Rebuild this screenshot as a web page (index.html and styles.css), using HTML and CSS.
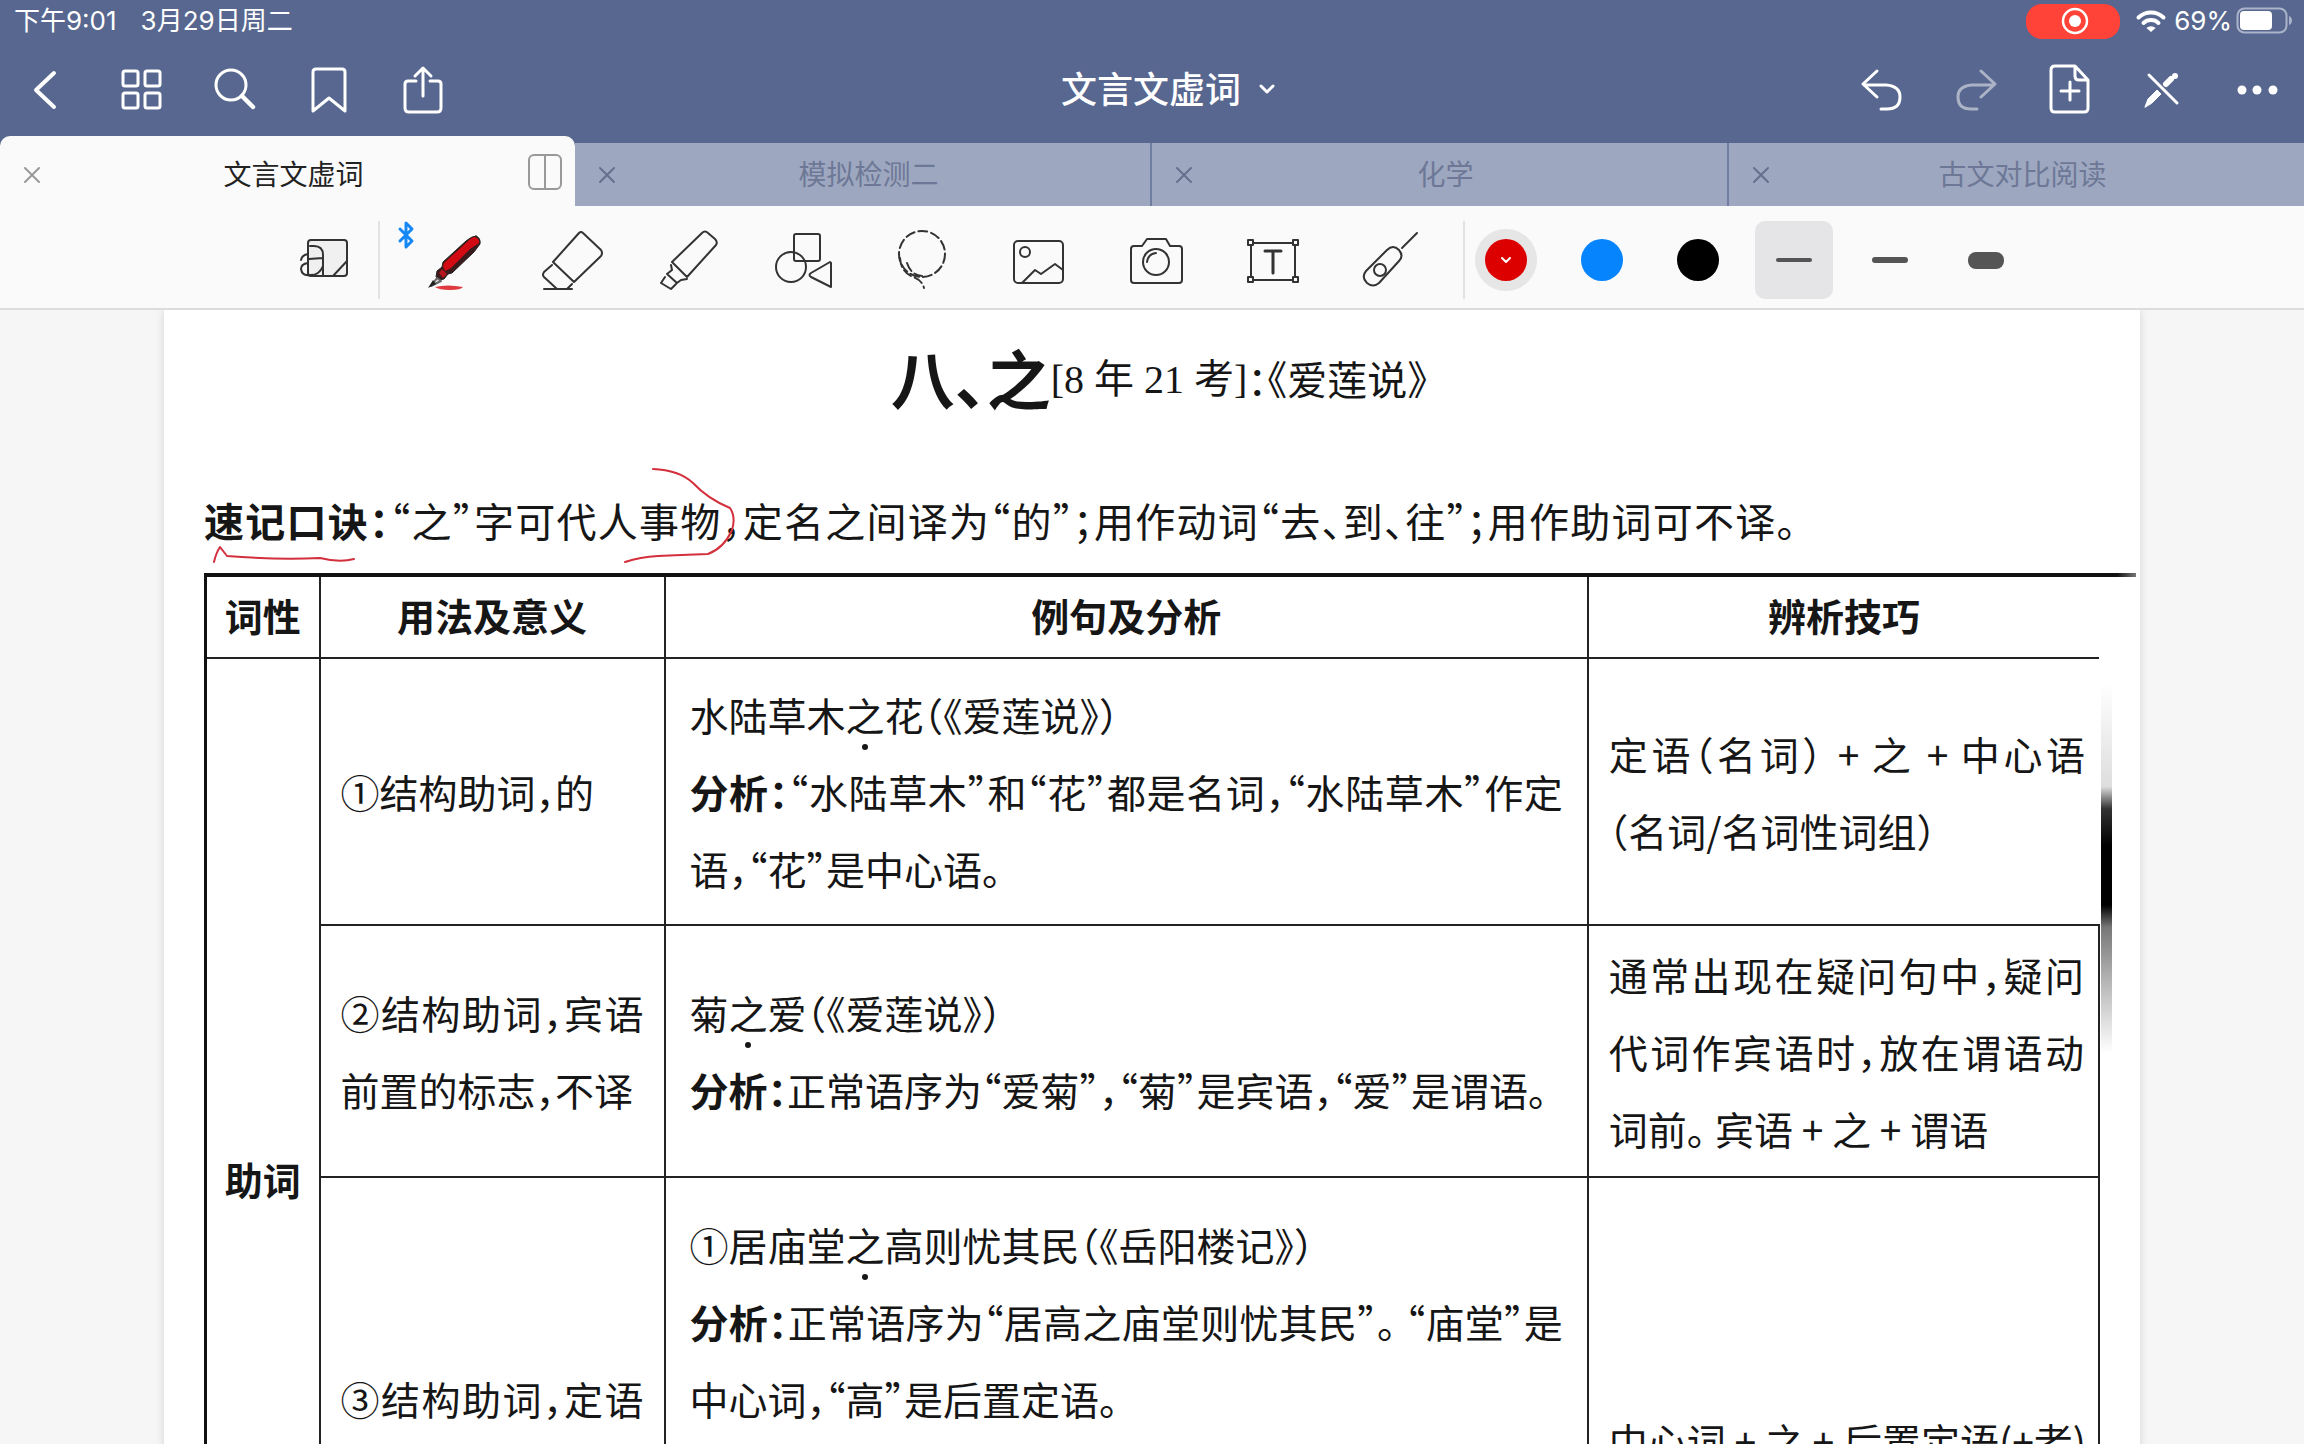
FILE: index.html
```html
<!DOCTYPE html>
<html lang="zh-CN">
<head>
<meta charset="utf-8">
<title>文言文虚词</title>
<link rel="stylesheet" href="styles.css">
</head>
<body>
<header class="top">
  <div class="status">
    <div class="clock"><span>下午9:01</span><span>3月29日周二</span></div>
    <div class="status-right">
      <span class="rec"><svg width="28" height="28" viewBox="0 0 28 28"><circle cx="14" cy="14" r="12" fill="none" stroke="#fff" stroke-width="2.5"/><circle cx="14" cy="14" r="6" fill="#fff"/></svg></span>
      <svg class="wifi" width="30" height="24" viewBox="0 0 30 24"><g fill="none" stroke="#fff" stroke-width="4"><path d="M2.500 8.500a18 18 0 0 1 25 0"/><path d="M7.500 14a11 11 0 0 1 15 0"/></g><path d="M15 23l-4.600-4a6.600 6.600 0 0 1 9.200 0z" fill="#fff"/></svg>
      <span>69%</span>
      <svg width="56" height="28" viewBox="0 0 56 28"><rect x="1.500" y="1.500" width="49" height="24" rx="7" fill="none" stroke="#aab3c9" stroke-width="2"/><rect x="4" y="4" width="32" height="19" rx="4" fill="#fff"/><path d="M53 9q3 1 3 4.500t-3 4.500z" fill="#aab3c9"/></svg>
    </div>
  </div>
  <nav class="nav">
    <div class="group">
      <button aria-label="返回"><svg width="48" height="48" viewBox="0 0 48 48"><path d="M31 7L13 24l18 17" stroke-width="4"/></svg></button>
      <button aria-label="缩略图"><svg width="48" height="48" viewBox="0 0 48 48"><rect x="6" y="5" width="15" height="15" rx="2"/><rect x="28" y="5" width="15" height="15" rx="2"/><rect x="6" y="27" width="15" height="15" rx="2"/><rect x="28" y="27" width="15" height="15" rx="2"/></svg></button>
      <button aria-label="搜索"><svg width="48" height="48" viewBox="0 0 48 48"><circle cx="20" cy="19" r="15"/><path d="M31 30l11 11" stroke-width="4.500"/></svg></button>
      <button aria-label="书签"><svg width="48" height="48" viewBox="0 0 48 48"><path d="M8 45V6q0-3 3-3h26q3 0 3 3v39L24 32z"/></svg></button>
      <button aria-label="分享"><svg width="48" height="48" viewBox="0 0 48 48"><path d="M17 15H9q-3 0-3 3v24q0 4 4 4h28q4 0 4-4V18q0-3-3-3h-8M24 30V3M16 10l8-8 8 8"/></svg></button>
    </div>
    <button class="doc-name">文言文虚词<svg width="16" height="12" viewBox="0 0 16 12"><path d="M2 2l6 6 6-6"/></svg></button>
    <div class="group end">
      <button aria-label="撤销"><svg width="48" height="48" viewBox="0 0 48 48"><path d="M20 5L6 18l14 13M7 19h22q14 1 14 12 0 12-13 12h-6"/></svg></button>
      <button class="off" aria-label="重做"><svg width="48" height="48" viewBox="0 0 48 48"><path d="M30 5l14 13-14 13M43 19H21Q7 20 7 31q0 12 13 12h6"/></svg></button>
      <button aria-label="添加页面"><svg width="48" height="48" viewBox="0 0 48 48"><path d="M10 0h20l13 14v28q0 4-4 4H10q-4 0-4-4V4q0-4 4-4zM30 1v9q0 4 4 4h8M25 16v18M16 25h18"/></svg></button>
      <button aria-label="只读模式"><svg width="48" height="48" viewBox="0 0 48 48"><path d="M10 9l28 28"/><path d="M6 41l3-8 9-9 4 4-9 9z" fill="#fff" stroke-width="1"/><path d="M27 18l5-5M36 10v0" stroke-width="6"/></svg></button>
      <button aria-label="更多"><svg width="48" height="48" viewBox="0 0 48 48"><g fill="#fff" stroke="none"><circle cx="9" cy="24" r="4.500"/><circle cx="24" cy="24" r="4.500"/><circle cx="40" cy="24" r="4.500"/></g></svg></button>
    </div>
  </nav>
  <div class="tabs">
    <div class="tab active"><button aria-label="关闭"><svg width="16" height="16" viewBox="0 0 16 16"><path d="M1 1l14 14M15 1L1 15"/></svg></button><a href="#">文言文虚词</a><button class="split" aria-label="分屏"><svg width="34" height="36" viewBox="0 0 34 36"><rect x="1" y="1" width="32" height="34" rx="5"/><path d="M17 1v34"/></svg></button></div>
    <div class="tab"><button aria-label="关闭"><svg width="16" height="16" viewBox="0 0 16 16"><path d="M1 1l14 14M15 1L1 15"/></svg></button><a href="#">模拟检测二</a></div>
    <div class="tab"><button aria-label="关闭"><svg width="16" height="16" viewBox="0 0 16 16"><path d="M1 1l14 14M15 1L1 15"/></svg></button><a href="#">化学</a></div>
    <div class="tab"><button aria-label="关闭"><svg width="16" height="16" viewBox="0 0 16 16"><path d="M1 1l14 14M15 1L1 15"/></svg></button><a href="#">古文对比阅读</a></div>
  </div>
</header>

<div class="tools">
  <button class="zoom" aria-label="缩放窗口"><svg width="64" height="64" viewBox="0 0 64 64"><rect x="15" y="12" width="39" height="36" rx="3" fill="#f0f0f0"/><path d="M17 18h4q9 0 9 9v21M16 31l14-1M15 26q-6 1-7 6M15 35q-7 1-7 6 1 7 8 6 10 1 14-9M54 33L40 48"/></svg></button>
  <div class="tool-set">
    <button aria-label="钢笔"><svg width="64" height="64" viewBox="0 0 64 64"><path d="M54 8q5 2 4 8l-6 8-22 21-4 1-4 5-5 1-3-3 1-6 5-4 1-5L44 13q6-5 10-5z" fill="#3a1a1a" stroke="#222" stroke-width="1"/><path d="M53 9q5 2 4 6l-9 6-19 19-6 3-2-5 1-3L45 14q5-5 8-5z" fill="#d20a14" stroke="none"/><path d="M20 41l5 5-4 4-4-5z" fill="#b5151c" stroke="none"/><path d="M15 50l4 3-10 5z" fill="#ddd" stroke="#666"/><path d="M6 60l5-8 3 4z" fill="#222" stroke="none"/><path d="M13 59q12-3 28 0-2 3-13 3t-15-3z" fill="#e03a40" stroke="none"/></svg><svg class="bt" width="16" height="28" viewBox="0 0 16 28"><path d="M2 8l12 12-6 6V2l6 6L2 20"/></svg></button>
    <button aria-label="橡皮"><svg width="64" height="64" viewBox="0 0 64 64"><path d="M40 5q2-2 4 0l18 17q2 3 0 6L35 54 14 34zM13 37l-8 7q-2 3 0 5l13 12h10l5-5M5 61h28"/></svg></button>
    <button aria-label="荧光笔"><svg width="64" height="64" viewBox="0 0 64 64"><path d="M46 5q3-3 6 0l7 6q3 3 1 6L31 49 16 34zM15 37l1 5-5 4 10 9 4-3 6-1M9 49l-4 6 10 6 5-5"/></svg></button>
    <button aria-label="形状"><svg width="64" height="64" viewBox="0 0 64 64"><rect x="21" y="6" width="26" height="27" rx="2"/><circle cx="18" cy="39" r="15"/><path d="M58 35v24L38 49q-3-2 0-4l19-11z"/></svg></button>
    <button aria-label="套索"><svg width="64" height="64" viewBox="0 0 64 64"><circle cx="32" cy="26" r="23" stroke-dasharray="9 4"/><path d="M10 30q1 14 13 19 9 3 11 11M17 35q4 12 15 13" stroke-dasharray="9 4"/></svg></button>
    <button aria-label="图片"><svg width="64" height="64" viewBox="0 0 64 64"><rect x="7" y="13" width="49" height="42" rx="4"/><circle cx="18" cy="24" r="5"/><path d="M15 55l13-13 6 4 14-10 8 6"/></svg></button>
    <button aria-label="相机"><svg width="64" height="64" viewBox="0 0 64 64"><path d="M10 18h8l5-7h19l4 7h9q3 0 3 3v31q0 3-3 3H10q-3 0-3-3V21q0-3 3-3z"/><circle cx="32" cy="34" r="13"/><path d="M23 34q1-8 9-9"/></svg></button>
    <button aria-label="文本框"><svg width="64" height="64" viewBox="0 0 64 64"><rect x="10" y="15" width="44" height="37"/><g fill="#fafafa"><rect x="7" y="12" width="5" height="5"/><rect x="52" y="12" width="5" height="5"/><rect x="7" y="49" width="5" height="5"/><rect x="52" y="49" width="5" height="5"/></g><path d="M24 23h16M32 23v22" stroke-width="3"/></svg></button>
    <button aria-label="激光笔"><svg width="64" height="64" viewBox="0 0 64 64"><path d="M29 22q6-6 12 0 5 6 0 11L21 55q-6 5-12 0-6-6-1-12z"/><circle cx="22" cy="42" r="6"/><path d="M44 20L59 5"/></svg></button>
  </div>
  <div class="pens">
    <button class="ring" aria-label="红色"><span class="ink red"><svg width="12" height="9" viewBox="0 0 12 9"><path d="M2 2l4 4 4-4"/></svg></span></button>
    <button aria-label="蓝色"><span class="ink blue"></span></button>
    <button aria-label="黑色"><span class="ink black"></span></button>
    <button class="picked" aria-label="细"><span class="line thin"></span></button>
    <button aria-label="中"><span class="line mid"></span></button>
    <button aria-label="粗"><span class="line thick"></span></button>
  </div>
</div>

<main class="desk">
  <article class="paper">
    <h1><b>八、之</b><small>[8 年 21 考]</small><span>：《爱莲说》</span></h1>
    <p class="tip"><b>速记口诀：</b>“之”字可代人事物，定名之间译为“的”；用作动词“去、到、往”；用作助词可不译。
      <svg class="scrawl" width="540" height="76" viewBox="0 0 540 76"><path d="M449-23q26 1 40 14 15 16 37 25 6 9 2 22-8 18-24 24-28 1-50 2-18 1-33 6"/><path d="M10 70q2-9 6-15l7 9q50 4 93 2 20 5 34 1"/></svg>
    </p>
    <div class="sheet">
      <table>
        <colgroup><col class="c1"><col class="c2"><col class="c3"><col class="c4"></colgroup>
        <thead><tr><th>词性</th><th>用法及意义</th><th>例句及分析</th><th class="open">辨析技巧</th></tr></thead>
        <tbody>
          <tr class="r1">
            <th rowspan="3">助词</th>
            <td>①结构助词，的</td>
            <td class="case"><p>水陆草木<em>之</em>花（《爱莲说》）</p><p class="full"><b>分析：</b>“水陆草木”和“花”都是名词，“水陆草木”作定</p><p>语，“花”是中心语。</p></td>
            <td class="hint open"><p class="full">定语（名词） + 之 + 中心语</p><p>（名词/名词性词组）</p></td>
          </tr>
          <tr class="r2">
            <td><p class="full">②结构助词，宾语</p><p>前置的标志，不译</p></td>
            <td class="case"><p>菊<em>之</em>爱（《爱莲说》）</p><p><b>分析：</b>正常语序为“爱菊”，“菊”是宾语，“爱”是谓语。</p></td>
            <td class="hint"><p class="full">通常出现在疑问句中，疑问</p><p class="full">代词作宾语时，放在谓语动</p><p>词前。 宾语 + 之 + 谓语</p></td>
          </tr>
          <tr class="r3">
            <td class="upper"><p class="full">③结构助词，定语</p></td>
            <td class="case first"><p>①居庙堂<em>之</em>高则忧其民（《岳阳楼记》）</p><p class="full"><b>分析：</b>正常语序为“居高之庙堂则忧其民”。 “庙堂”是</p><p>中心词，“高”是后置定语。</p></td>
            <td class="hint"><p class="full">中心词 + 之 + 后置定语(+者)</p></td>
          </tr>
        </tbody>
      </table>
      <i class="smudge"></i>
    </div>
  </article>
</main>
</body>
</html>
```
FILE: styles.css
```css
* { box-sizing: border-box; }

body {
  margin: 0;
  height: 100vh;
  overflow: hidden;
  display: flex;
  flex-direction: column;
  background: #f6f6f6;
  font-family: Inter, "Noto Sans CJK SC", sans-serif;
}

button {
  display: flex;
  align-items: center;
  justify-content: center;
  padding: 0;
  border: 0;
  background: none;
  color: inherit;
  font: inherit;
}

a { color: inherit; text-decoration: none; }
p { margin: 0; }
svg { display: block; overflow: visible; fill: none; stroke-linecap: round; stroke-linejoin: round; }

/* title area */
.top { flex: none; background: #57678f; color: #fff; }

.status {
  display: flex;
  align-items: center;
  justify-content: space-between;
  height: 44px;
  padding: 0 12px 2px 14px;
  font-size: 26px;
  line-height: 32px;
}
.clock { display: flex; gap: 24px; }
.status-right { display: flex; align-items: center; }
.rec {
  display: flex;
  align-items: center;
  justify-content: center;
  width: 94px;
  height: 35px;
  border-radius: 16px;
  background: #ff4338;
}
.wifi { margin: 0 8px 0 16px; }
.status-right svg:last-child { margin-left: 4px; }

.nav {
  display: grid;
  grid-template-columns: 1fr auto 1fr;
  align-items: center;
  height: 92px;
}
.nav svg { stroke: #fff; stroke-width: 3; }
.group { display: flex; }
.group.end { justify-content: flex-end; }
.group button { width: 94px; height: 80px; }
.off { opacity: .5; }
.doc-name { gap: 18px; padding-left: 32px; font-size: 36px; font-weight: 500; line-height: 48px; }

.tabs { display: flex; align-items: flex-end; height: 70px; }
.tab {
  flex: 1;
  display: grid;
  grid-template-columns: 64px 1fr 52px;
  align-items: center;
  height: 63px;
  background: #9ea7c0;
  color: #6d7896;
  font-size: 28px;
  line-height: 40px;
  text-align: center;
}
.tab + .tab + .tab { border-left: 2px solid #6f7da0; }
.tab svg { stroke: #66708c; stroke-width: 2; }
.tab.active {
  height: 70px;
  padding-top: 7px;
  border-radius: 10px 10px 0 0;
  background: #fafafa;
  color: #222;
}
.tab.active svg { stroke: #999; }
.split { padding: 0 8px 6px 0; }

/* drawing tools */
.tools {
  flex: none;
  display: flex;
  align-items: center;
  justify-content: center;
  height: 104px;
  padding: 6px 8px 0 0;
  border-bottom: 2px solid #dcdcdc;
  background: #fafafa;
}
.tools svg { stroke: #333; stroke-width: 2; }
.zoom { width: 106px; height: 78px; }
.tool-set {
  display: flex;
  padding: 0 14px 0 16px;
  border: solid #e2e2e2;
  border-width: 0 2px;
}
.tool-set button { position: relative; width: 117px; height: 78px; }
.tools .bt { position: absolute; left: 2px; top: 0; stroke: #1588f5; stroke-width: 3; }
.pens { display: flex; gap: 18px; padding-left: 2px; }
.pens button { width: 78px; height: 78px; border-radius: 10px; }
.pens .picked { background: #e5e5e7; }
.ink {
  display: flex;
  align-items: center;
  justify-content: center;
  width: 42px;
  height: 42px;
  border-radius: 50%;
}
.red { background: #dc0000; box-shadow: 0 0 0 10px #e6e6e6; }
.tools .red svg { stroke: #fff; }
.blue { background: #0584fe; }
.black { background: #000; }
.line { width: 36px; border-radius: 8px; background: #555; }
.thin { height: 4px; }
.mid { height: 6px; }
.thick { height: 17px; }

/* scanned page */
.desk { flex: 1; min-height: 0; padding: 0 164px; overflow: hidden; }
.paper {
  min-height: 100%;
  padding: 28px 40px 0;
  background: #fff;
  box-shadow: 0 0 8px #d4d4d8;
  color: #161616;
  font-family: "Noto Sans CJK SC", sans-serif;
  font-feature-settings: "halt";
}

h1 {
  display: flex;
  align-items: center;
  justify-content: center;
  margin: 0 0 74px;
  padding-left: 14px;
  font-size: 40px;
  font-weight: 400;
  line-height: 80px;
}
h1 b { padding-bottom: 4px; font-size: 64px; font-weight: 700; line-height: 76px; }
h1 small { padding-top: 4px; font-family: "Liberation Serif", "Noto Sans CJK SC", serif; font-size: 40px; line-height: 76px; }

.tip {
  position: relative;
  width: 84%;
  margin-bottom: 25px;
  font-size: 40px;
  line-height: 56px;
  text-align-last: justify;
}
.scrawl { position: absolute; left: 0; top: 0; stroke: #d32f3c; stroke-width: 2; }

.sheet { position: relative; }
.sheet::after {
  content: "";
  position: absolute;
  top: 0;
  right: -36px;
  width: 38px;
  height: 4px;
  background: linear-gradient(90deg, #111 50%, #777);
}
table {
  width: 100%;
  border-collapse: collapse;
  border-top: 4px solid #111;
  border-left: 3px solid #111;
  table-layout: fixed;
  font-size: 39px;
  line-height: 77px;
}
.c1 { width: 114px; }
.c2 { width: 345px; }
.c4 { width: 27%; }
th, td { border: 2px solid #222; }
th { padding: 0 0 4px; font-size: 38px; font-weight: 700; line-height: 72px; }
td { padding: 0 20px; }
.case { padding: 0 24px; }
.hint { padding: 0 14px 0 20px; }
.open { border-right: 0; }
thead tr { height: 83px; }
.r1 { height: 267px; }
.r2 { height: 252px; }
.r3 { height: 526px; }
.r3 .upper { padding-bottom: 84px; }
.r3 .first { padding-top: 28px; vertical-align: top; }
.full { text-align-last: justify; white-space: nowrap; }

/* emphasis dot below the studied word */
em { position: relative; font-style: normal; }
em::after {
  content: "";
  position: absolute;
  left: 16px;
  bottom: -8px;
  width: 6px;
  height: 6px;
  border-radius: 50%;
  background: #161616;
}

.smudge {
  position: absolute;
  top: 110px;
  right: -12px;
  width: 11px;
  height: 370px;
  background: linear-gradient(transparent, #ddd 28%, #333 34%, #000 44%, #000 60%, #777 66%, #bbb 82%, transparent);
}
```
